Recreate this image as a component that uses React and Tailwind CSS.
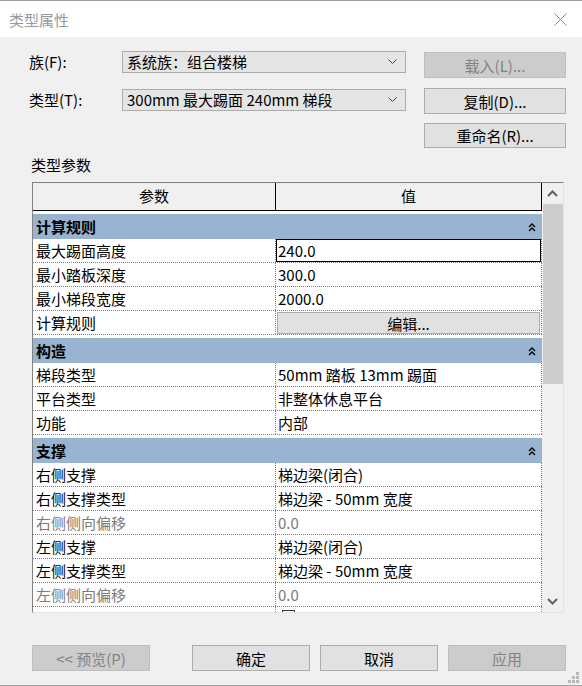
import React from "react";

const groups = [
  {
    title: "计算规则",
    rows: [
      { name: "最大踢面高度", value: "240.0", selected: true },
      { name: "最小踏板深度", value: "300.0" },
      { name: "最小梯段宽度", value: "2000.0" },
      { name: "计算规则", button: "编辑..." },
    ],
  },
  {
    title: "构造",
    rows: [
      { name: "梯段类型", value: "50mm 踏板 13mm 踢面" },
      { name: "平台类型", value: "非整体休息平台" },
      { name: "功能", value: "内部" },
    ],
  },
  {
    title: "支撑",
    rows: [
      { name: "右侧支撑", value: "梯边梁(闭合)" },
      { name: "右侧支撑类型", value: "梯边梁 - 50mm 宽度" },
      { name: "右侧侧向偏移", value: "0.0", muted: true },
      { name: "左侧支撑", value: "梯边梁(闭合)" },
      { name: "左侧支撑类型", value: "梯边梁 - 50mm 宽度" },
      { name: "左侧侧向偏移", value: "0.0", muted: true },
      { name: "", check: true },
    ],
  },
];

function Caret({ className = "" }) {
  return (
    <svg width="10" height="10" viewBox="0 0 10 10" className={className}>
      <polyline points="2,5 5,2 8,5" fill="none" stroke="#000" strokeWidth="1.4" />
      <polyline points="2,9 5,6 8,9" fill="none" stroke="#000" strokeWidth="1.4" />
    </svg>
  );
}

function Chevron({ up }) {
  return (
    <svg width="11" height="7" viewBox="0 0 11 7">
      <polyline
        points={up ? "1,6 5.5,1.5 10,6" : "1,1 5.5,5.5 10,1"}
        fill="none"
        stroke="#606060"
        strokeWidth="2"
      />
    </svg>
  );
}

function Select({ text }) {
  return (
    <div className="w-[284px] h-[22px] bg-[#e5e5e5] border border-[#acacac] flex items-center justify-between pl-[4px] pr-[8px]">
      <span className="leading-[20px] whitespace-pre">{text}</span>
      <svg width="9" height="6" viewBox="0 0 9 6">
        <polyline points="0.5,0.5 4.5,4.5 8.5,0.5" fill="none" stroke="#444" strokeWidth="1" />
      </svg>
    </div>
  );
}

function Button({ children, disabled, className = "" }) {
  return (
    <div
      className={
        "flex items-center justify-center border leading-none " +
        (disabled
          ? "bg-[#cccccc] border-[#bfbfbf] text-[#838383] "
          : "bg-[#e1e1e1] border-[#adadad] text-black ") +
        className
      }
    >
      {children}
    </div>
  );
}

function Row({ row }) {
  const tone = row.muted ? "text-[#7a7a7a]" : "text-black";
  return (
    <div className="flex h-[24px] border-b border-dotted border-[#808080] shrink-0">
      <div className={"w-[243px] border-r border-dotted border-[#808080] pl-[3px] leading-[23px] " + tone}>
        {row.name}
      </div>
      <div className="w-[266px] border-r border-dotted border-[#808080] relative">
        {row.selected && (
          <div className={"h-[23px] border border-black pl-[1px] leading-[21px] " + tone}>{row.value}</div>
        )}
        {row.button && (
          <div className="mt-px ml-px mr-px h-[22px] bg-[#e1e1e1] border border-[#adadad] flex items-center justify-center leading-none">
            {row.button}
          </div>
        )}
        {row.check && (
          <div className="ml-[6px] mt-[3px] w-[13px] h-[13px] border border-[#333] bg-white" />
        )}
        {!row.selected && !row.button && !row.check && (
          <div className={"pl-[2px] leading-[23px] " + tone}>{row.value}</div>
        )}
      </div>
    </div>
  );
}

export default function App() {
  return (
    <div
      lang="zh-CN"
      className="relative w-[582px] h-[686px] flex flex-col border-t border-b border-[#a0a0a0] bg-[#f0f0f0] text-[15px] text-black font-['Noto_Sans_CJK_SC','Noto_Sans',sans-serif] overflow-hidden"
    >
      {/* 标题栏 */}
      <div className="h-[36px] bg-white flex items-center justify-between pl-[9px] pr-[15px] shrink-0">
        <span className="text-[#999999] leading-none">类型属性</span>
        <svg width="13" height="13" viewBox="0 0 13 13">
          <line x1="0.5" y1="0.5" x2="12.5" y2="12.5" stroke="#8a8a8a" strokeWidth="1" />
          <line x1="12.5" y1="0.5" x2="0.5" y2="12.5" stroke="#8a8a8a" strokeWidth="1" />
        </svg>
      </div>

      <div className="flex flex-col pl-[29px] pt-[14px]">
        {/* 族 */}
        <div className="flex items-start h-[27px]">
          <div className="w-[93px] h-[22px] leading-[22px]">族(F):</div>
          <Select text="系统族：组合楼梯" />
          <Button disabled className="ml-[18px] mt-px w-[142px] h-[26px]">载入(L)...</Button>
        </div>

        {/* 类型 */}
        <div className="flex items-start h-[26px] mt-[10px]">
          <div className="w-[93px] h-[22px] mt-px leading-[22px]">类型(T):</div>
          <div className="mt-px">
            <Select text="300mm 最大踢面 240mm 梯段" />
          </div>
          <Button className="ml-[18px] w-[142px] h-[26px]">复制(D)...</Button>
        </div>

        <div className="flex mt-[9px] h-[25px]">
          <Button className="ml-[395px] w-[142px] h-[25px]">重命名(R)...</Button>
        </div>

        <div className="mt-[7px] h-[20px] leading-[20px] pl-[2px]">类型参数</div>

        {/* 参数表 */}
        <div className="mt-[7px] ml-[3px] w-[532px] h-[431px] flex border-l border-t border-[#828282] border-r border-r-[#e3e3e3] border-b border-b-[#e3e3e3]">
          <div className="w-[509px] flex flex-col bg-white overflow-hidden">
            <div className="flex h-[28px] shrink-0 bg-[#f0f0f0] border-b border-black">
              <div className="w-[243px] border-r border-black flex items-center justify-center">参数</div>
              <div className="w-[266px] border-r border-black flex items-center justify-center">值</div>
            </div>
            {groups.map((g) => (
              <div key={g.title} className="flex flex-col shrink-0">
                <div className="mt-[3px] h-[25px] bg-[#99b4d1] flex items-center justify-between pl-[3px] pr-[5px] font-bold">
                  <span className="leading-none">{g.title}</span>
                  <Caret />
                </div>
                {g.rows.map((r, i) => (
                  <Row key={i} row={r} />
                ))}
              </div>
            ))}
          </div>

          {/* 滚动条 */}
          <div className="w-[21px] flex flex-col bg-[#f0f0f0]">
            <div className="h-[21px] flex items-center justify-center shrink-0">
              <Chevron up />
            </div>
            <div className="ml-px w-[20px] h-[180px] bg-[#cdcdcd] shrink-0" />
            <div className="flex-1" />
            <div className="h-[21px] flex items-center justify-center shrink-0">
              <Chevron />
            </div>
          </div>
        </div>

        {/* 底部按钮 */}
        <div className="flex mt-[32px] h-[26px]">
          <Button disabled className="ml-[3px] w-[118px] h-[26px]">&lt;&lt; 预览(P)</Button>
          <Button className="ml-[42px] w-[118px] h-[26px]">确定</Button>
          <Button className="ml-[10px] w-[118px] h-[26px]">取消</Button>
          <Button disabled className="ml-[10px] w-[118px] h-[26px]">应用</Button>
        </div>
      </div>

      {/* 尺寸手柄 */}
      <div className="absolute right-[3px] bottom-[2px] grid grid-cols-3 gap-px w-[11px] h-[11px]">
        <span />
        <span />
        <span className="bg-[#b8b8b8]" />
        <span />
        <span className="bg-[#b8b8b8]" />
        <span className="bg-[#b8b8b8]" />
        <span className="bg-[#b8b8b8]" />
        <span className="bg-[#b8b8b8]" />
        <span className="bg-[#b8b8b8]" />
      </div>
    </div>
  );
}
